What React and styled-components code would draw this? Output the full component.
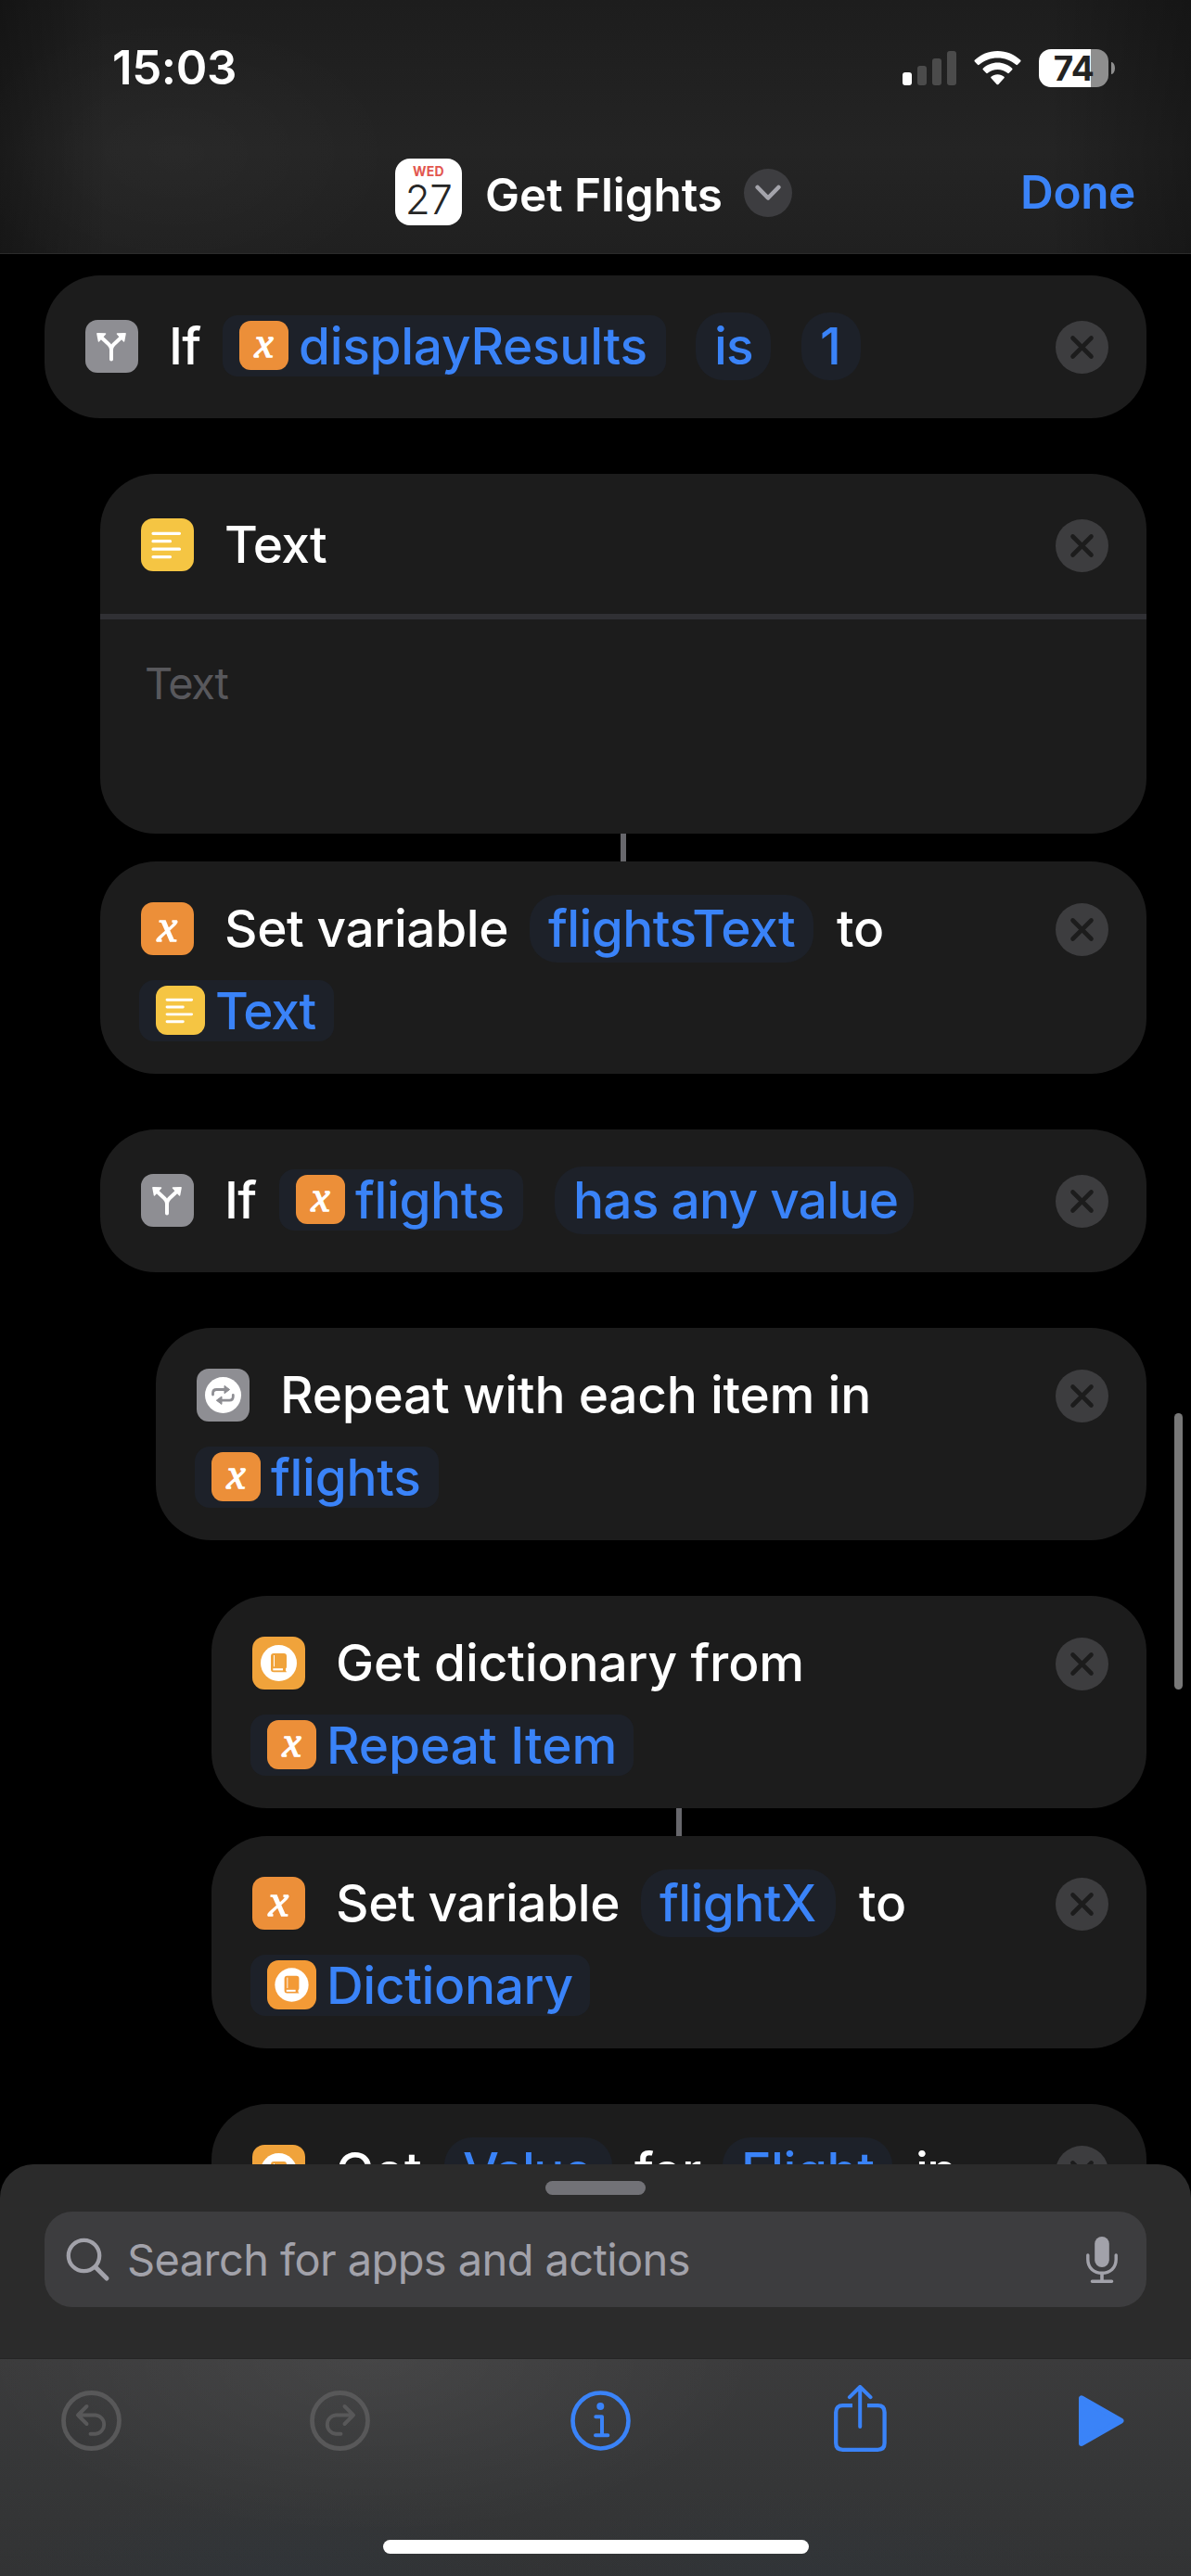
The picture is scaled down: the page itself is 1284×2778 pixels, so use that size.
import React from "react";
import styled, { createGlobalStyle, css } from "styled-components";

const color = {
  blue: "#3a83f8",
  card: "#1c1c1c",
  chip: "#1d2129",
  orange: "#ec8f39",
  yellow: "#f5c543",
  amber: "#f0a33b",
  grey: "#8e8e93",
};

const GlobalStyle = createGlobalStyle`
  * { box-sizing: border-box; }
  body {
    margin: 0;
    background: #000;
    font-family: Inter, "Liberation Sans", sans-serif;
    -webkit-font-smoothing: antialiased;
  }
  svg { display: block; flex: none; }
`;

const Screen = styled.div`
  display: flex;
  flex-direction: column;
  width: 1284px;
  height: 2778px;
  overflow: hidden;
  background: #000;
`;

/* ---------- header ---------- */

const Header = styled.header`
  flex: none;
  height: 274px;
  border-bottom: 1px solid #2b2b2b;
  background:
    linear-gradient(90deg, rgba(0, 0, 0, 0.3), transparent 9%, transparent 88%, rgba(0, 0, 0, 0.28)),
    radial-gradient(ellipse 240px 150px at 190px 165px, rgba(255, 255, 255, 0.025), transparent),
    linear-gradient(#1d1d1d, #242424 60%, #202020);
`;

const StatusBar = styled.div`
  display: flex;
  align-items: center;
  height: 146px;
  padding: 0 82px 0 121px;
`;

const Clock = styled.div`
  flex: 1;
  font-size: 51px;
  font-weight: 600;
  line-height: 60px;
  letter-spacing: -0.4px;
  color: #fff;
`;

const StatusIcons = styled.div`
  display: flex;
  align-items: center;
  gap: 19px;
`;

const Bars = styled.div`
  display: flex;
  align-items: flex-end;
  gap: 6px;
  height: 37px;
`;

const Bar = styled.i`
  width: 10px;
  height: ${(p) => p.$h}px;
  border-radius: 3px;
  background: ${(p) => (p.$on ? "#fff" : "#4b4b4b")};
`;

const BatteryWrap = styled.div`
  display: flex;
  align-items: center;
  gap: 3px;
`;

const Battery = styled.div`
  display: flex;
  align-items: center;
  justify-content: center;
  width: 75px;
  height: 41px;
  border-radius: 13px;
  background: linear-gradient(90deg, #fff 56px, #8e8e8e 56px);
  color: #222;
  font-size: 37px;
  font-weight: 700;
  line-height: 41px;
  letter-spacing: -0.5px;
`;

const BatteryCap = styled.i`
  width: 4px;
  height: 13px;
  border-radius: 0 4px 4px 0 / 0 7px 7px 0;
  background: #8e8e8e;
`;

const NavBar = styled.div`
  display: grid;
  grid-template-columns: 426px 1fr auto;
  align-items: start;
  height: 127px;
  padding: 25px 60px 0 0;
`;

const TitleGroup = styled.div`
  display: flex;
  grid-column: 2;
  align-items: center;
  height: 72px;
`;

const CalendarIcon = styled.div`
  display: flex;
  flex-direction: column;
  align-items: center;
  width: 72px;
  height: 72px;
  border-radius: 16px;
  background: #fff;
`;

const Weekday = styled.span`
  margin-top: 5px;
  font-size: 14px;
  font-weight: 700;
  line-height: 18px;
  letter-spacing: 0.3px;
  color: #e2564e;
`;

const DayNumber = styled.span`
  font-size: 44px;
  font-weight: 300;
  line-height: 42px;
  letter-spacing: -0.5px;
  color: #262626;
`;

const Title = styled.h1`
  margin: 5px 0 0 25px;
  font-size: 49.5px;
  font-weight: 600;
  line-height: 60px;
  letter-spacing: -0.09px;
  color: #fff;
`;

const TitleMenu = styled.div`
  display: grid;
  place-items: center;
  width: 52px;
  height: 52px;
  margin: 2px 0 0 23px;
  border-radius: 50%;
  background: #3d3d40;
`;

const Done = styled.div`
  margin-top: 6px;
  font-size: 49.5px;
  font-weight: 600;
  line-height: 60px;
  letter-spacing: -0.39px;
  color: ${color.blue};
`;

/* ---------- action list ---------- */

const List = styled.main`
  position: relative;
  flex: none;
  display: flex;
  flex-direction: column;
  height: 2060px;
  padding: 23px 48px 0;
  overflow: hidden;
`;

const ScrollThumb = styled.i`
  position: absolute;
  top: 1250px;
  right: 9px;
  width: 9px;
  height: 298px;
  border-radius: 5px;
  background: #787878;
`;

const Card = styled.section`
  flex: none;
  margin-left: ${(p) => p.$indent * 60}px;
  border-radius: 60px;
  background: ${color.card};
  & + & { margin-top: 60px; }
`;

const Connector = styled.i`
  flex: none;
  align-self: center;
  width: 6px;
  height: 30px;
  margin-left: ${(p) => p.$indent * 60}px;
  background: #67676c;
`;

const headPadding = {
  single: "40px 41px 41px 44px",
  withBody: "40px 41px 38px 44px",
  double: "36px 41px 31px 44px",
};

const CardHead = styled.div`
  display: flex;
  align-items: flex-start;
  padding: ${(p) => headPadding[p.$kind]};
`;

const Lines = styled.div`
  flex: 1;
  display: flex;
  flex-direction: column;
  gap: 16px;
  min-width: 0;
`;

const Row = styled.div`
  display: flex;
  align-items: flex-start;
  height: 73px;
  white-space: nowrap;
  font-size: 55px;
  font-weight: 500;
  line-height: 73px;
`;

const Tile = styled.span`
  flex: none;
  display: grid;
  place-items: center;
  width: ${(p) => p.$size}px;
  height: ${(p) => p.$size}px;
  border-radius: ${(p) => p.$size * 0.23}px;
  background: ${(p) => p.$bg};
`;

const LeadIcon = styled.div`
  margin: 8px 33px 0 0;
`;

const VariableGlyph = styled.span`
  font-family: "Liberation Serif", serif;
  font-style: italic;
  font-weight: 400;
  font-size: ${(p) => p.$size * 0.86}px;
  line-height: ${(p) => p.$size}px;
  height: ${(p) => p.$size}px;
  transform: translateY(-${(p) => p.$size * 0.05}px);
  -webkit-text-stroke: 1.3px #fff;
  color: #fff;
`;

const Word = styled.span`
  flex: none;
  width: ${(p) => (p.$w ? p.$w + "px" : "auto")};
  margin-left: ${(p) => p.$gap || 0}px;
  letter-spacing: ${(p) => p.$ls}px;
  color: #fff;
`;

const Chip = styled.span`
  flex: none;
  display: flex;
  width: ${(p) => p.$w}px;
  margin-left: ${(p) => p.$gap || 0}px;
  letter-spacing: ${(p) => p.$ls}px;
  background: ${color.chip};
  color: ${color.blue};
  ${(p) =>
    p.$icon
      ? css`
          gap: 11px;
          height: 66px;
          margin-top: 3px;
          padding: 6px 0 0 18px;
          border-radius: 16px;
          line-height: 55px;
        `
      : css`
          height: 73px;
          padding-left: 20px;
          border-radius: 30px;
        `}
`;

const CloseButton = styled.div`
  flex: none;
  display: grid;
  place-items: center;
  width: 57px;
  height: 57px;
  margin-top: 9px;
  border-radius: 50%;
  background: #3d3d3f;
`;

const TextBody = styled.div`
  height: 237px;
  padding: 39px 48px;
  border-top: 6px solid #303034;
  font-size: 47px;
  line-height: 60px;
  letter-spacing: -1.4px;
  color: #58585c;
`;

/* ---------- bottom sheet and toolbar ---------- */

const Sheet = styled.section`
  flex: none;
  display: flex;
  flex-direction: column;
  align-items: center;
  height: 210px;
  padding: 18px 48px 0;
  border-bottom: 1px solid #242424;
  border-radius: 36px 36px 0 0;
  background: #2b2b2b;
`;

const Grabber = styled.i`
  width: 108px;
  height: 15px;
  border-radius: 8px;
  background: #727277;
`;

const SearchField = styled.div`
  display: flex;
  align-items: center;
  align-self: stretch;
  height: 103px;
  margin-top: 18px;
  padding: 0 30px 0 22px;
  border-radius: 30px;
  background: #3d3d3f;
`;

const Placeholder = styled.span`
  flex: 1;
  margin: 1px 0 0 18px;
  font-size: 47px;
  line-height: 60px;
  letter-spacing: -0.6px;
  color: #a2a2aa;
`;

const Toolbar = styled.footer`
  flex: none;
  display: flex;
  flex-direction: column;
  align-items: center;
  justify-content: space-between;
  height: 234px;
  padding: 28px 0 24px;
  background:
    radial-gradient(ellipse 420px 190px at 400px 0, rgba(255, 255, 255, 0.055), transparent),
    radial-gradient(ellipse 300px 90px at 300px 234px, rgba(40, 60, 80, 0.16), transparent),
    radial-gradient(ellipse 300px 90px at 860px 234px, rgba(40, 60, 80, 0.14), transparent),
    linear-gradient(#3b3b3c, #363738 45%, #323334);
`;

const Tools = styled.div`
  display: grid;
  grid-template-columns: 268px 281px 284px 264px 49px;
  align-self: stretch;
  align-items: start;
  padding-left: 66px;
`;

const Tool = styled.div`
  margin-top: ${(p) => p.$top}px;
`;

const HomeIndicator = styled.i`
  width: 459px;
  height: 15px;
  border-radius: 8px;
  background: #fff;
`;

/* ---------- icons ---------- */

const BranchIcon = ({ size }) => (
  <svg width={size} height={size} viewBox="0 0 57 57" fill="none">
    <path d="M28 42.5V32Q28 29 25.500 26.500L18 19.500M28 32Q28 29 30.500 26.500L38 19.500" stroke="#fff" strokeWidth="4" strokeLinecap="round" strokeLinejoin="round" />
    <path d="M13 14.800L21.500 15L14.500 22.800ZM43 14.800L34.500 15L41.500 22.800Z" fill="#fff" stroke="#fff" strokeWidth="1.600" strokeLinejoin="round" />
  </svg>
);

const TextIcon = ({ size }) => (
  <svg width={size} height={size} viewBox="0 0 57 57">
    <path d="M13 16.300H41.500M13 24.700H31.500M13 33.200H41.500M13 41.600H31.500" stroke="#fff" strokeWidth="3.200" strokeLinecap="round" />
  </svg>
);

const RepeatIcon = ({ size }) => (
  <svg width={size} height={size} viewBox="0 0 57 57" fill="none">
    <circle cx="28.500" cy="28.500" r="19.500" fill="#fff" />
    <path d="M17.500 28V26.500Q17.500 22.500 21.500 22.500H30M39.300 28.500V30Q39.300 34.200 35.300 34.200H27" stroke={color.grey} strokeWidth="2.800" strokeLinecap="round" />
    <path d="M30 18.400L35.600 22.500L30 26.700ZM27 30L21.300 34.200L27 38.400Z" fill={color.grey} stroke={color.grey} strokeWidth="1" strokeLinejoin="round" />
  </svg>
);

const DictionaryIcon = ({ size, tint }) => (
  <svg width={size} height={size} viewBox="0 0 57 57" fill="none">
    <circle cx="28.500" cy="28.500" r="19.500" fill="#fff" />
    <path d="M23.200 18H34Q37 18 37 21V32.500Q37 34 36 34.500V37Q37 37.200 37 38.200H23.200Q20 38.200 20 35V21.200Q20 18 23.200 18Z" fill={tint} />
    <path d="M23.500 20V32.300" stroke="#fff" strokeWidth="1" />
    <path d="M22.300 35.300H33" stroke="#fff" strokeWidth="2.200" />
  </svg>
);

const tiles = {
  branch: { bg: color.grey, draw: (s) => <BranchIcon size={s} /> },
  text: { bg: color.yellow, draw: (s) => <TextIcon size={s} /> },
  repeat: { bg: color.grey, draw: (s) => <RepeatIcon size={s} /> },
  dictionary: { bg: color.amber, draw: (s) => <DictionaryIcon size={s} tint={color.amber} /> },
  dictionaryValue: { bg: "#f39a36", draw: (s) => <DictionaryIcon size={s} tint="#f39a36" /> },
  variable: { bg: color.orange, draw: (s) => <VariableGlyph $size={s}>x</VariableGlyph> },
};

const IconTile = ({ kind, size }) => (
  <Tile $size={size} $bg={tiles[kind].bg}>
    {tiles[kind].draw(size)}
  </Tile>
);

const CloseIcon = () => (
  <CloseButton>
    <svg width="27" height="27" viewBox="0 0 27 27">
      <path d="M3.500 3.500L23.500 23.500M23.500 3.500L3.500 23.500" stroke={color.card} strokeWidth="4.600" strokeLinecap="round" />
    </svg>
  </CloseButton>
);

const WifiIcon = () => (
  <svg width="51" height="37" viewBox="0 0 51 37" fill="#fff">
    <path d="M25.500 0C35 0 43.700 3.700 50.200 9.800Q51 10.600 50.200 11.400L47 14.800Q46.200 15.600 45.400 14.800C40 10 33.100 7.400 25.500 7.400S11 10 5.600 14.800Q4.800 15.600 4 14.800L.8 11.400Q0 10.600 .8 9.800C7.300 3.700 16 0 25.500 0Z" />
    <path d="M25.500 12.600C31.500 12.600 37 14.900 41.200 18.700Q42 19.500 41.200 20.300L37.800 23.800Q37 24.600 36.200 23.800C33.300 21.300 29.600 19.900 25.500 19.900S17.700 21.300 14.800 23.800Q14 24.600 13.200 23.800L9.800 20.300Q9 19.500 9.800 18.700C14 14.900 19.500 12.600 25.500 12.600Z" />
    <path d="M25.500 25.300C28.300 25.300 30.500 26.200 32.500 27.700Q33.300 28.500 32.500 29.300L26.400 35.900Q25.500 36.800 24.600 35.900L18.500 29.300Q17.700 28.500 18.500 27.700C20.500 26.200 22.700 25.300 25.500 25.300Z" />
  </svg>
);

const ChevronIcon = () => (
  <svg width="28" height="18" viewBox="0 0 28 18" fill="none">
    <path d="M2.700 3L14 14.500L25.300 3" stroke="#a4a4ab" strokeWidth="4.600" strokeLinecap="round" strokeLinejoin="round" />
  </svg>
);

const SearchIcon = () => (
  <svg width="49" height="49" viewBox="0 0 49 49" fill="none" stroke="#a2a2aa" strokeLinecap="round">
    <circle cx="20.500" cy="20.500" r="16.700" strokeWidth="4.300" />
    <path d="M33 33L45 45" strokeWidth="5" />
  </svg>
);

const MicIcon = () => (
  <svg width="36" height="52" viewBox="0 0 36 52" fill="none" stroke="#a2a2aa" strokeLinecap="round">
    <rect x="10.200" y="1" width="15.600" height="33" rx="7.800" fill="#a2a2aa" stroke="none" />
    <path d="M2.800 21V25.500C2.800 35 9.500 40.300 18 40.300S33.200 35 33.200 25.500V21" strokeWidth="3.400" />
    <path d="M18 41V49M7.500 49.200H28.500" strokeWidth="3.600" />
  </svg>
);

const TurnIcon = ({ flip }) => (
  <svg width="65" height="65" viewBox="0 0 65 65" fill="none" stroke="#585859" strokeLinecap="round" strokeLinejoin="round">
    <circle cx="32.500" cy="32.500" r="30" strokeWidth="4.800" />
    <g transform={flip ? "matrix(-1 0 0 1 65 0)" : undefined}>
      <path d="M27.500 17L18 26.500L27.500 36M18 26.500H37A10.200 10.200 0 0 1 37 46.800H31.500" strokeWidth="3.900" />
    </g>
  </svg>
);

const InfoIcon = () => (
  <svg width="65" height="65" viewBox="0 0 65 65" fill="none" stroke={color.blue} strokeLinecap="round" strokeLinejoin="round">
    <circle cx="32.500" cy="32.500" r="30" strokeWidth="4.600" />
    <circle cx="32.300" cy="17" r="4" fill={color.blue} stroke="none" />
    <path d="M27.300 28.300H34V48.300M27 48.300H40.300" strokeWidth="4" />
  </svg>
);

const ShareIcon = () => (
  <svg width="57" height="73" viewBox="0 0 57 73" fill="none" stroke={color.blue}>
    <path d="M20 22.200H9.500Q2.200 22.200 2.200 29.500V62.500Q2.200 69.800 9.500 69.800H47.300Q54.600 69.800 54.600 62.500V29.500Q54.600 22.200 47.300 22.200H36" strokeWidth="4.300" />
    <path d="M28.200 45V3M16.900 13.200L28.200 2L39.500 13.200" strokeWidth="4" strokeLinecap="round" strokeLinejoin="round" />
  </svg>
);

const PlayIcon = () => (
  <svg width="49" height="56" viewBox="0 0 49 56">
    <path d="M3 3.300V52L45.500 27.600Z" fill={color.blue} stroke={color.blue} strokeWidth="6" strokeLinejoin="round" />
  </svg>
);

/* ---------- content ---------- */

const word = (text, ls, opts = {}) => ({ type: "word", text, ls, ...opts });
const chip = (text, w, ls, opts = {}) => ({ type: "chip", text, w, ls, ...opts });

const actions = [
  {
    indent: 0,
    icon: "branch",
    lines: [[
      word("If", -0.8, { w: 58 }),
      chip("displayResults", 478, -0.3, { icon: "variable" }),
      chip("is", 81, -0.86, { gap: 32 }),
      chip("1", 64, 0, { gap: 33 }),
    ]],
  },
  { indent: 1, icon: "text", lines: [[word("Text", -0.78)]], body: "Text" },
  {
    indent: 1,
    linked: true,
    icon: "variable",
    lines: [
      [word("Set variable", -0.4, { w: 329 }), chip("flightsText", 306, -0.6), word("to", -0.18, { gap: 25 })],
      [chip("Text", 210, -1.3, { icon: "text", gap: -2 })],
    ],
  },
  {
    indent: 1,
    icon: "branch",
    lines: [[
      word("If", -0.8, { w: 59 }),
      chip("flights", 263, -0.4, { icon: "variable" }),
      chip("has any value", 387, -0.75, { gap: 34 }),
    ]],
  },
  {
    indent: 2,
    icon: "repeat",
    lines: [
      [word("Repeat with each item in", -0.25)],
      [chip("flights", 263, -0.3, { icon: "variable", gap: -2 })],
    ],
  },
  {
    indent: 3,
    icon: "dictionary",
    lines: [
      [word("Get dictionary from", -0.17)],
      [chip("Repeat Item", 413, -0.05, { icon: "variable", gap: -2 })],
    ],
  },
  {
    indent: 3,
    linked: true,
    icon: "variable",
    lines: [
      [word("Set variable", -0.4, { w: 329 }), chip("flightX", 210, -0.6), word("to", -0.18, { gap: 25 })],
      [chip("Dictionary", 366, -0.35, { icon: "dictionaryValue", gap: -2 })],
    ],
  },
  {
    indent: 3,
    icon: "dictionary",
    lines: [
      [
        word("Get", 0.29, { w: 117 }),
        chip("Value", 181, -1.6),
        word("for", -0.8, { gap: 24, w: 95 }),
        chip("Flight", 183, -0.4),
        word("in", -1.5, { gap: 25 }),
      ],
      [],
    ],
  },
];

const headKind = (action) =>
  action.lines.length > 1 ? "double" : action.body ? "withBody" : "single";

const Token = ({ token }) =>
  token.type === "word" ? (
    <Word $w={token.w} $gap={token.gap} $ls={token.ls}>{token.text}</Word>
  ) : (
    <Chip $w={token.w} $gap={token.gap} $ls={token.ls} $icon={!!token.icon}>
      {token.icon && <IconTile kind={token.icon} size={53} />}
      <span>{token.text}</span>
    </Chip>
  );

const Action = ({ action }) => (
  <>
    {action.linked && <Connector $indent={action.indent} />}
    <Card $indent={action.indent}>
      <CardHead $kind={headKind(action)}>
        <Lines>
          {action.lines.map((line, i) => (
            <Row key={i}>
              {i === 0 && (
                <LeadIcon>
                  <IconTile kind={action.icon} size={57} />
                </LeadIcon>
              )}
              {line.map((token, j) => (
                <Token key={j} token={token} />
              ))}
            </Row>
          ))}
        </Lines>
        <CloseIcon />
      </CardHead>
      {action.body && <TextBody>{action.body}</TextBody>}
    </Card>
  </>
);

export default function App() {
  return (
    <Screen>
      <GlobalStyle />
      <Header>
        <StatusBar>
          <Clock>15:03</Clock>
          <StatusIcons>
            <Bars>
              <Bar $h={14} $on />
              <Bar $h={21} />
              <Bar $h={29} />
              <Bar $h={37} />
            </Bars>
            <WifiIcon />
            <BatteryWrap>
              <Battery>74</Battery>
              <BatteryCap />
            </BatteryWrap>
          </StatusIcons>
        </StatusBar>
        <NavBar>
          <TitleGroup>
            <CalendarIcon>
              <Weekday>WED</Weekday>
              <DayNumber>27</DayNumber>
            </CalendarIcon>
            <Title>Get Flights</Title>
            <TitleMenu>
              <ChevronIcon />
            </TitleMenu>
          </TitleGroup>
          <Done>Done</Done>
        </NavBar>
      </Header>

      <List>
        {actions.map((action, i) => (
          <Action key={i} action={action} />
        ))}
        <ScrollThumb />
      </List>

      <Sheet>
        <Grabber />
        <SearchField>
          <SearchIcon />
          <Placeholder>Search for apps and actions</Placeholder>
          <MicIcon />
        </SearchField>
      </Sheet>

      <Toolbar>
        <Tools>
          <Tool $top={6}><TurnIcon /></Tool>
          <Tool $top={6}><TurnIcon flip /></Tool>
          <Tool $top={6}><InfoIcon /></Tool>
          <Tool $top={0}><ShareIcon /></Tool>
          <Tool $top={11}><PlayIcon /></Tool>
        </Tools>
        <HomeIndicator />
      </Toolbar>
    </Screen>
  );
}
